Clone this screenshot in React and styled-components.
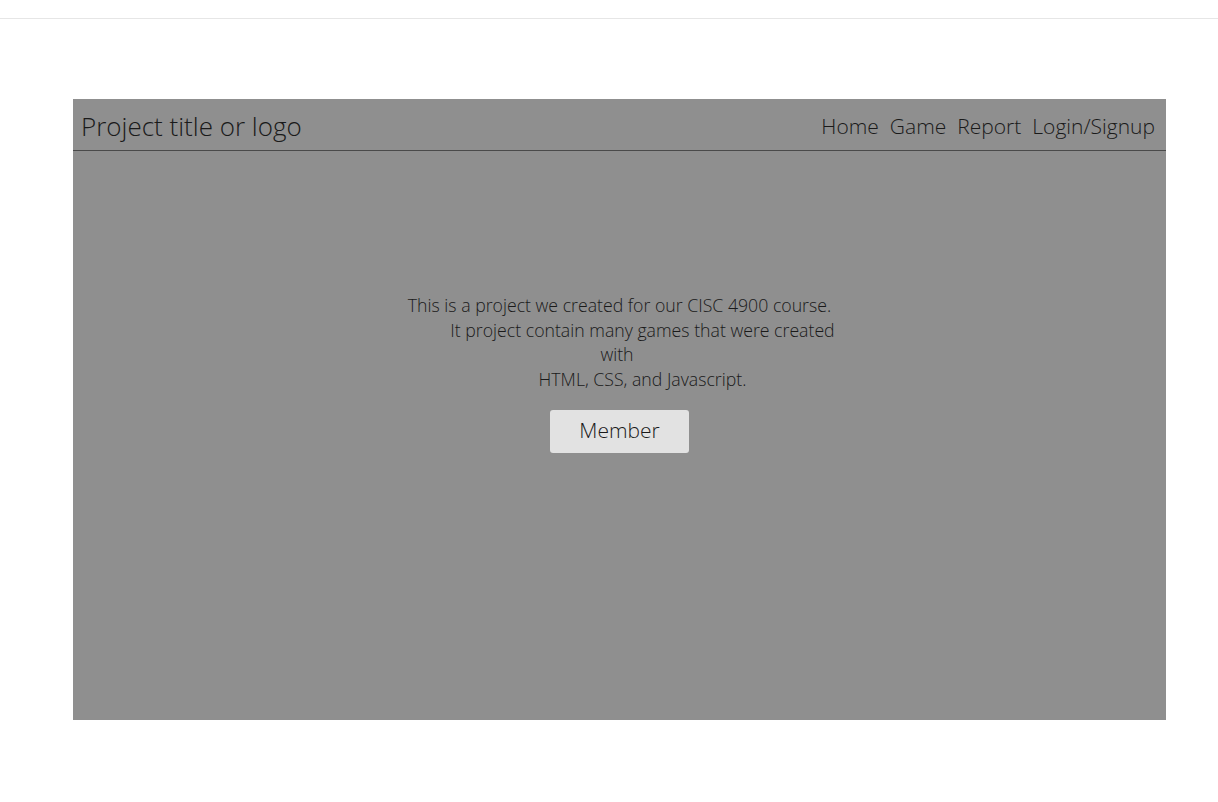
import React from "react";
import styled, { createGlobalStyle } from "styled-components";

const Global = createGlobalStyle`
  html, body { margin: 0; padding: 0; background: #ffffff; }
  body { font-family: "Open Sans", "Liberation Sans", sans-serif; font-weight: 300; color: #1a1a1a; }
`;

const TopBar = styled.div`
  height: 18px;
  border-bottom: 1px solid #e6e6e6;
`;

const Page = styled.div`
  padding: 80px 52px 0 73px;
`;

const Panel = styled.main`
  background: #8f8f8f;
  height: 621px;
  display: flex;
  flex-direction: column;
`;

const Header = styled.header`
  height: 52px;
  border-bottom: 1px solid #4a4a4a;
  display: flex;
  align-items: center;
  justify-content: space-between;
  padding: 0 11px 0 8px;
  box-sizing: border-box;
`;

const Title = styled.div`
  font-size: 26px;
  font-weight: 300;
  color: #1a1a1a;
  padding-top: 2px;
`;

const Nav = styled.nav`
  display: flex;
  gap: 11px;
  padding-top: 3px;
`;

const NavLink = styled.a`
  font-size: 21px;
  font-weight: 300;
  color: #1a1a1a;
  text-decoration: none;
`;

const Body = styled.section`
  flex: 1;
  display: flex;
  flex-direction: column;
  align-items: center;
  padding-top: 142px;
`;

const Text = styled.p`
  margin: 0;
  text-align: center;
  font-size: 17.7px;
  line-height: 24.5px;
  color: #1a1a1a;
`;

const Line = styled.span`
  display: block;
  padding-left: ${(p) => (p.$indent ? "46px" : "0")};
  padding-right: ${(p) => (p.$trail ? "5px" : "0")};
`;

const Button = styled.button`
  margin-top: 19px;
  width: 139px;
  height: 43px;
  padding: 0 0 4px;
  background: #e2e2e2;
  border: none;
  border-radius: 3px;
  font-family: "Open Sans", "Liberation Sans", sans-serif;
  font-weight: 300;
  font-size: 21px;
  color: #1a1a1a;
  cursor: pointer;
`;

export default function App() {
  return (
    <>
      <Global />
      <TopBar />
      <Page>
        <Panel>
          <Header>
            <Title>Project title or logo</Title>
            <Nav>
              <NavLink href="#">Home</NavLink>
              <NavLink href="#">Game</NavLink>
              <NavLink href="#">Report</NavLink>
              <NavLink href="#">Login/Signup</NavLink>
            </Nav>
          </Header>
          <Body>
            <Text>
              <Line>This is a project we created for our CISC 4900 course.</Line>
              <Line $indent>It project contain many games that were created</Line>
              <Line $trail>with</Line>
              <Line $indent>HTML, CSS, and Javascript.</Line>
            </Text>
            <Button>Member</Button>
          </Body>
        </Panel>
      </Page>
    </>
  );
}
